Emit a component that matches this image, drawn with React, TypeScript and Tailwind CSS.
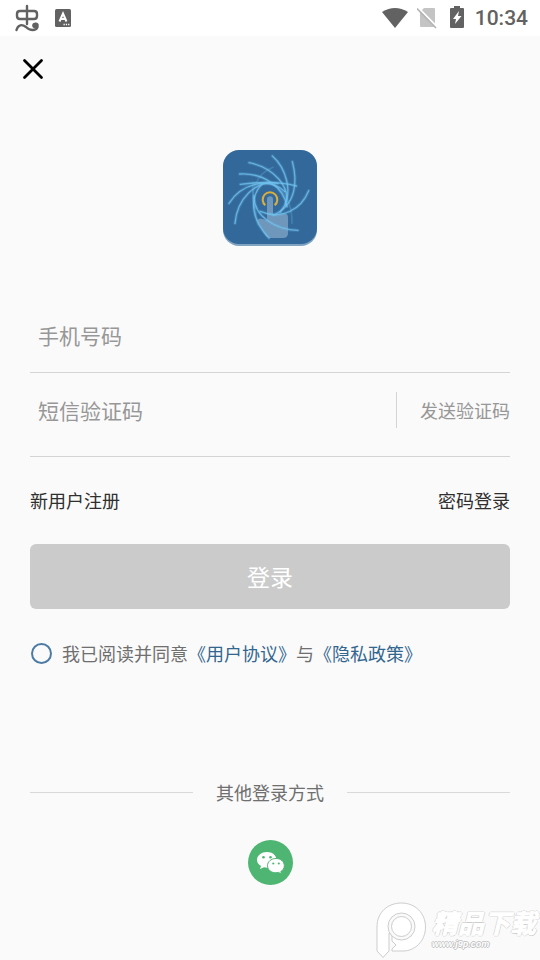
import React, { useState } from "react";

const lightTrails = [
  "M78 38C150 52 205 110 188 165",
  "M50 72C120 68 182 110 192 170",
  "M148 18C185 50 218 130 172 186",
  "M208 35C224 95 220 165 150 196",
  "M257 122C235 178 175 212 112 184",
  "M225 241C160 240 92 200 93 138",
  "M138 264C85 210 78 145 115 104",
  "M36 220C42 150 95 88 165 100",
  "M18 160C55 102 135 78 186 125",
  "M52 103C110 95 175 95 220 108",
];

const faintTrails = [
  "M150 52C95 75 82 125 94 175",
  "M207 220C208 160 185 112 130 98",
  "M90 100C85 150 100 190 105 225",
];

const StatusBar = () => (
  <div className="flex h-9 items-center justify-between bg-white pl-3.5 pr-3 text-[#626262]">
    <div className="flex items-center gap-3.5">
      <svg viewBox="0 0 26 28" className="h-7 w-[26px]" fill="none" stroke="currentColor" strokeWidth="2.4" strokeLinecap="round">
        <path d="M6 7H20Q23 7 23 10V12Q23 15 20 15H6Q3 15 3 12V10Q3 7 6 7Z" />
        <path d="M13 2V20" />
        <path d="M2.500 26C4 20.500 8 20 12 23C16 27 22 27 23.500 23" />
        <circle cx="21" cy="21.500" r="2.800" fill="currentColor" stroke="none" />
        <path d="M23 23C25 20.500 22 18 20 20.500" strokeWidth="2" />
      </svg>
      <svg viewBox="0 0 18 18" className="size-[18px]">
        <rect x="1" width="16" height="18" rx="1.500" fill="currentColor" />
        <path d="M5.500 12.500L9 4.500L12.500 12.500M6.800 10H11.200" fill="none" stroke="#fff" strokeWidth="2" />
        <path d="M9.500 15.500H16" stroke="#fff" strokeWidth="1.300" strokeDasharray="1.300 1" />
      </svg>
    </div>
    <div className="flex items-center">
      <svg viewBox="0 0 28 22" className="h-[22px] w-7" fill="currentColor">
        <path d="M1 5Q14 -3 27 5L14 21Z" />
      </svg>
      <svg viewBox="0 0 20 22" className="ml-2 h-[22px] w-5">
        <path d="M7 1H17Q18 1 18 2V19Q18 20 17 20H4Q3 20 3 19V5Z" fill="#c4c4c4" />
        <path d="M1 0.500L20 20" stroke="#fff" strokeWidth="2" />
        <path d="M0 1.500L19 21" stroke="#b4b4b4" strokeWidth="1.600" />
      </svg>
      <svg viewBox="0 0 16 22" className="mb-0.5 ml-3 h-[22px] w-4">
        <path d="M5 0H11V2H14Q15 2 15 3V21Q15 22 14 22H2Q1 22 1 21V3Q1 2 2 2H5Z" fill="currentColor" />
        <path d="M10 5L4 13H7L6 18L12.500 10H9Z" fill="#fff" />
      </svg>
      <span className="ml-2.5 font-[Roboto,sans-serif] text-[21px] font-medium leading-7">10:34</span>
    </div>
  </div>
);

const AppLogo = () => (
  <svg viewBox="0 0 282 288" className="h-24 w-[94px]" role="img" aria-label="logo">
    <rect y="6" width="282" height="282" rx="48" fill="#7fa3c0" />
    <rect width="282" height="282" rx="48" fill="#33699a" />
    <path d="M132 148Q132 139 141 139T150 148V194L186 190Q195 191 195 204V250Q195 264 180 264H141Q132 264 126 255L105 218Q102 204 114 206L132 210Z" fill="#a9c6dc" opacity="0.5" />
    <g fill="none" stroke="#72c4f0" strokeLinecap="round">
      {lightTrails.map((d) => (
        <g key={d}>
          <path d={d} strokeWidth="10" opacity="0.2" />
          <path d={d} strokeWidth="4" opacity="0.75" />
        </g>
      ))}
      {faintTrails.map((d) => (
        <path key={d} d={d} strokeWidth="5" opacity="0.25" />
      ))}
    </g>
    <path d="M127 166A22 22 0 1 1 155 166" fill="none" stroke="#dcae3c" strokeWidth="6" />
  </svg>
);

const WechatIcon = () => (
  <svg viewBox="0 0 45 45" className="size-[45px]">
    <circle cx="22.500" cy="22.500" r="22.500" fill="#4fb573" />
    <path d="M19 12C13.500 12 9 15.500 9 20C9 22.500 10.500 24.700 13 26L12 29L16 27.300L19 27.800C24.500 27.800 28.500 24.500 28.500 20S24.500 12 19 12Z" fill="#fff" />
    <path d="M28 18.500C23 18.500 19.500 21.700 19.500 25.700S23 32.800 28 32.800L30.500 32.400L33.500 34L32.800 31.500C35 30.300 36.300 28.200 36.300 25.700C36.300 21.700 33 18.500 28 18.500Z" fill="#fff" stroke="#4fb573" strokeWidth="1" />
    <g fill="#4fb573">
      <circle cx="15.500" cy="17.300" r="1.300" />
      <circle cx="22.500" cy="17.300" r="1.300" />
      <circle cx="25.300" cy="23.500" r="1.100" />
      <circle cx="30.800" cy="23.500" r="1.100" />
    </g>
  </svg>
);

const Watermark = () => (
  <div className="pointer-events-none absolute bottom-0 right-1 flex items-start gap-1">
    <svg viewBox="0 0 52 58" className="h-[58px] w-[52px]" fill="#fff" stroke="#cdcdcd">
      <path d="M1 49V25C1 10 12 1 25.500 1C39 1 49.500 11 49.500 25S39 49 27 49H16V47L20 43L16 39V33L13 31V49L7 55.500Z" />
      <circle cx="25.500" cy="24.500" r="13.500" fill="#fafafa" />
      <circle cx="25.500" cy="24.500" r="10" />
    </svg>
    <div className="flex flex-col pt-1 italic text-white">
      <span className="text-[26px] font-bold leading-8 [-webkit-text-stroke:1px_#fff] [text-shadow:1px_0_#c4c4c4,-1px_0_#c4c4c4,0_1px_#c4c4c4,0_-1px_#c4c4c4]">
        精品下载
      </span>
      <span className="font-['Liberation_Sans',sans-serif] text-[9px] font-bold leading-3 [text-shadow:1px_0_#c4c4c4,-1px_0_#c4c4c4,0_1px_#c4c4c4,0_-1px_#c4c4c4]">
        www.j9p.com
      </span>
    </div>
  </div>
);

const App = () => {
  const [phone, setPhone] = useState<string>("");
  const [code, setCode] = useState<string>("");
  const [agreed, setAgreed] = useState<boolean>(false);

  return (
    <div className="relative min-h-screen overflow-hidden bg-[#fafafa] font-['Noto_Sans_CJK_SC',sans-serif] text-[18px] leading-7">
      <StatusBar />

      <button type="button" aria-label="关闭" className="ml-[19px] mt-[19px] block text-black">
        <svg viewBox="0 0 28 28" className="size-7" fill="none" stroke="currentColor" strokeWidth="2.8" strokeLinecap="round">
          <path d="M5.500 5.500L22.500 22.500M22.500 5.500L5.500 22.500" />
        </svg>
      </button>

      <main className="px-[30px]">
        <div className="mt-[67px] flex justify-center">
          <AppLogo />
        </div>

        <form className="mt-[54px]" onSubmit={(e) => e.preventDefault()}>
          <div className="flex h-[73px] items-center border-b border-[#d4d4d4] px-2 pb-0.5">
            <input
              type="tel"
              aria-label="手机号码"
              placeholder="手机号码"
              value={phone}
              onChange={(e) => setPhone(e.target.value)}
              className="h-9 w-full bg-transparent text-[21px] outline-none placeholder:text-[#979797]"
            />
          </div>

          <div className="flex h-[84px] items-start border-b border-[#d4d4d4] pl-2 pt-[19px]">
            <input
              type="text"
              aria-label="短信验证码"
              placeholder="短信验证码"
              value={code}
              onChange={(e) => setCode(e.target.value)}
              className="h-9 min-w-0 flex-1 bg-transparent text-[21px] outline-none placeholder:text-[#979797]"
            />
            <button type="button" className="h-9 border-l border-[#d4d4d4] pl-[23px] text-[#979797]">
              发送验证码
            </button>
          </div>

          <div className="mt-[29px] flex justify-between text-[#2f2f2f]">
            <a href="#register">新用户注册</a>
            <a href="#password">密码登录</a>
          </div>

          <button type="submit" className="mt-[30px] h-[65px] w-full rounded-md bg-[#cbcbcb] pb-0.5 text-[23px] text-white">
            登录
          </button>

          <div className="mt-[30px] flex items-center text-[#6f6f6f]">
            <input
              id="agree"
              type="checkbox"
              checked={agreed}
              onChange={(e) => setAgreed(e.target.checked)}
              className="ml-px mr-2.5 size-[21px] shrink-0 appearance-none rounded-full border-2 border-[#4d7ba3] checked:bg-[#4d7ba3]"
            />
            <p>
              <label htmlFor="agree">我已阅读并同意</label>
              <a href="#terms" className="text-[#33668f]">《用户协议》</a>与
              <a href="#privacy" className="text-[#33668f]">《隐私政策》</a>
            </p>
          </div>
        </form>

        <div className="mt-[111px] flex items-center gap-[23px] text-[#6f6f6f]">
          <div className="h-px flex-1 bg-[#d9d9d9]" />
          <span>其他登录方式</span>
          <div className="h-px flex-1 bg-[#d9d9d9]" />
        </div>

        <div className="mt-[34px] flex justify-center pb-[75px]">
          <button type="button" aria-label="微信登录">
            <WechatIcon />
          </button>
        </div>
      </main>

      <Watermark />
    </div>
  );
};

export default App;
